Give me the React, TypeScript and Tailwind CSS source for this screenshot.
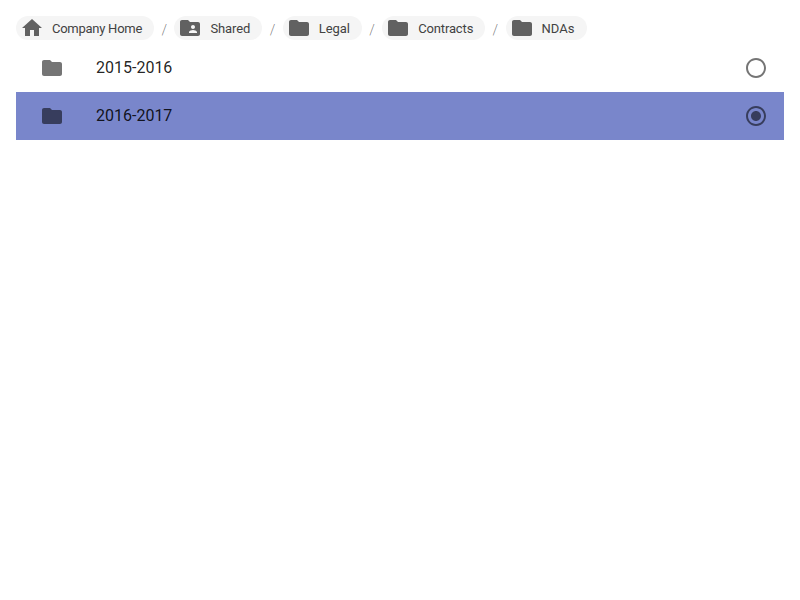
import React from "react";

const HOME = "M10 20v-6h4v6h5v-8h3L12 3 2 12h3v8z";
const FOLDER = "M10 4H4c-1.1 0-1.99.9-1.99 2L2 18c0 1.1.9 2 2 2h16c1.1 0 2-.9 2-2V8c0-1.1-.9-2-2-2h-8l-2-2z";
const SHARED = "M20 6h-8l-2-2H4c-1.1 0-1.99.9-1.99 2L2 18c0 1.1.9 2 2 2h16c1.1 0 2-.9 2-2V8c0-1.1-.9-2-2-2zm-5 3c1.1 0 2 .9 2 2s-.9 2-2 2-2-.9-2-2 .9-2 2-2zm4 8h-8v-1c0-1.33 2.67-2 4-2s4 .67 4 2v1z";
const RADIO_OFF = "M12 2C6.48 2 2 6.48 2 12s4.48 10 10 10 10-4.48 10-10S17.52 2 12 2zm0 18c-4.42 0-8-3.58-8-8s3.58-8 8-8 8 3.58 8 8-3.58 8-8 8z";
const RADIO_ON = "M12 7c-2.76 0-5 2.24-5 5s2.24 5 5 5 5-2.24 5-5-2.24-5-5-5zm0-5C6.48 2 2 6.48 2 12s4.48 10 10 10 10-4.48 10-10S17.52 2 12 2zm0 18c-4.42 0-8-3.58-8-8s3.58-8 8-8 8 3.58 8 8-3.58 8-8 8z";

function Icon({ d, className = "" }: { d: string; className?: string }) {
  return (
    <svg viewBox="0 0 24 24" fill="currentColor" className={`size-6 shrink-0 ${className}`}>
      <path d={d} />
    </svg>
  );
}

const crumbs = [
  { label: "Company Home", icon: HOME, width: "w-[138px]", tracking: "tracking-[-0.26px]" },
  { label: "Shared", icon: SHARED, width: "w-[88px]", tracking: "tracking-[-0.08px]" },
  { label: "Legal", icon: FOLDER, width: "w-[79px]", tracking: "tracking-[-0.08px]" },
  { label: "Contracts", icon: FOLDER, width: "w-[103px]", tracking: "tracking-[-0.14px]" },
  { label: "NDAs", icon: FOLDER, width: "w-[81px]", tracking: "tracking-normal" },
];

const rows = [
  { label: "2015-2016", selected: false },
  { label: "2016-2017", selected: true },
];

export default function App() {
  return (
    <div className="h-[600px] w-full bg-white px-4 pt-4 font-[Roboto,sans-serif]">
      <nav>
        <ol className="flex h-6 items-center">
          {crumbs.map((c, i) => (
            <React.Fragment key={c.label}>
              {i > 0 && (
                <li aria-hidden className="w-[20.4px] pt-[3px] text-center text-sm leading-6 font-light text-black/54">/</li>
              )}
              <li className={`flex h-6 items-center rounded-full bg-[#f5f5f5] pl-1 ${c.width}`}>
                <Icon d={c.icon} className="text-[#616161]" />
                <span className={`pt-0.5 pl-2 text-[13px] leading-6 whitespace-nowrap text-[#424242] ${c.tracking}`}>{c.label}</span>
              </li>
            </React.Fragment>
          ))}
        </ol>
      </nav>
      <ul className="pt-1">
        {rows.map((r) => (
          <li key={r.label} className={`flex h-12 items-center pr-4 pl-6 ${r.selected ? "bg-[#7986cb]" : ""}`}>
            <Icon d={FOLDER} className="text-black/54" />
            <span className="grow pl-8 text-base leading-6 text-black/87">{r.label}</span>
            <Icon d={r.selected ? RADIO_ON : RADIO_OFF} className="text-black/54" />
          </li>
        ))}
      </ul>
    </div>
  );
}
